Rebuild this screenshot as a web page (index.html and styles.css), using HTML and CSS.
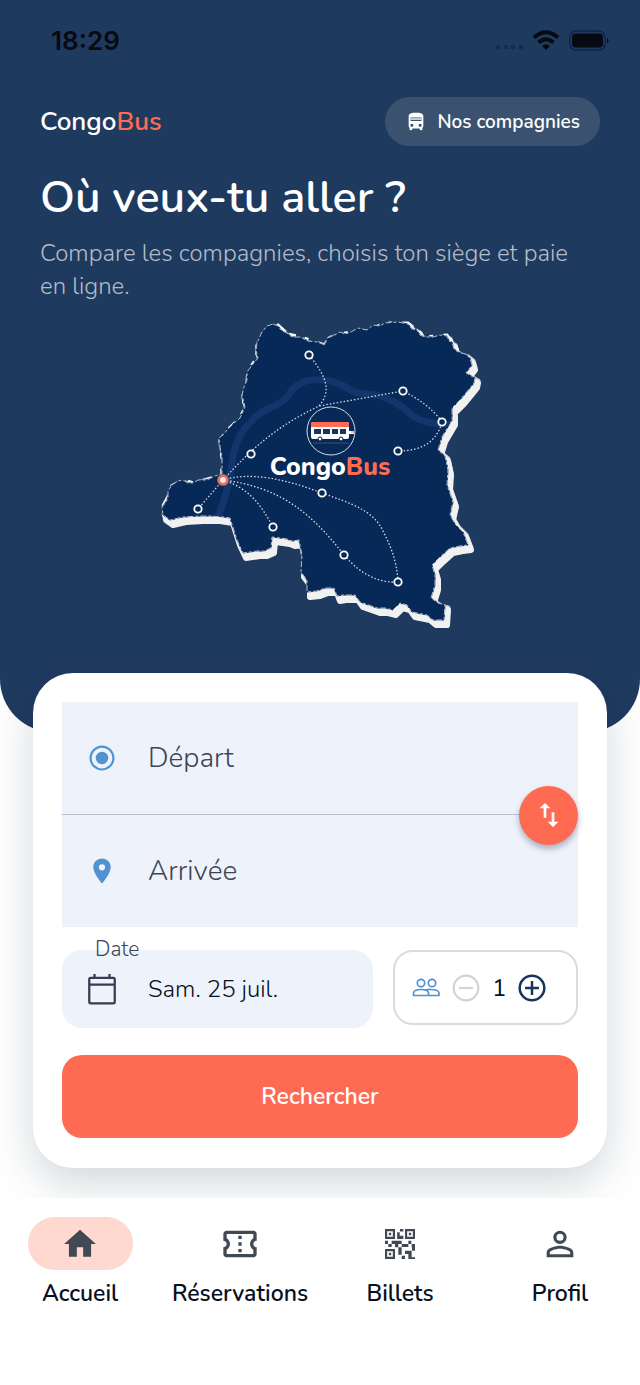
FILE: index.html
```html
<!DOCTYPE html>
<html lang="fr">
<head>
<meta charset="utf-8">
<meta name="viewport" content="width=device-width, initial-scale=1">
<title>CongoBus</title>
<link rel="stylesheet" href="styles.css">
</head>
<body>
<div class="app">
  <main class="content">
    <section class="hero">
      <div class="status">
        <span class="status-time">18:29</span>
        <svg class="status-icons" width="116" height="24" viewBox="0 0 116 24" aria-hidden="true">
          <g fill="#102b55"><rect x="2" y="16" width="4" height="4" rx="1"/><rect x="10" y="16" width="4" height="4" rx="1"/><rect x="17" y="16" width="4" height="4" rx="1"/><rect x="25" y="16" width="4" height="4" rx="1"/></g>
          <g fill="none" stroke="#070a10" stroke-width="4"><path d="M40 8.500Q52 -2 64 8.500"/><path d="M44.500 13.500Q52 7 59.500 13.500"/></g>
          <path d="M48 17Q52 13.500 56 17L52 21Z" fill="#070a10"/>
          <rect x="76" y="2" width="35" height="19" rx="6" fill="none" stroke="#092452" stroke-width="1.500"/>
          <rect x="78" y="4.500" width="31" height="14" rx="4" fill="#070a10"/>
          <path d="M113 8.500q3 3 0 6z" fill="#070a10"/>
        </svg>
      </div>
      <header class="topbar">
        <div class="brand">Congo<span class="accent">Bus</span></div>
        <button class="companies" type="button">
          <svg width="22" height="22" viewBox="0 0 24 24" fill="currentColor" aria-hidden="true"><path fill-rule="evenodd" d="M4 16c0 .88.39 1.670 1 2.220V20c0 .55.45 1 1 1h1c.55 0 1-.45 1-1v-1h8v1c0 .55.45 1 1 1h1c.55 0 1-.45 1-1v-1.780c.61-.55 1-1.340 1-2.220V6c0-3.500-3.580-4-8-4s-8 .5-8 4v10zm3.500 1.200a1.700 1.700 0 1 1 0-3.400 1.700 1.700 0 0 1 0 3.400zm9 0a1.700 1.700 0 1 1 0-3.400 1.700 1.700 0 0 1 0 3.400zM6 11V7h12v4z"/><path d="M6 8h12v1.500H6z"/></svg>
          Nos compagnies
        </button>
      </header>
      <h1 class="title">Où veux-tu aller ?</h1>
      <p class="lead">Compare les compagnies, choisis ton siège et paie en ligne.</p>
      <svg class="map" viewBox="150 310 340 326" role="img" aria-label="Carte des trajets CongoBus">
        <defs>
          <path id="land" d="M273 324L278 326L282 331L287 333L292 337L300 337L308 341L317 342L325 345L327 338L333 336L340 332L345 334L351 332L358 328L367 330L373 325L380 326L385 323L398 322L408 324L412 329L417 330L420 335L425 337L433 337L440 335L447 336L449 341L452 342L454 349L458 352L465 354L470 358L472 365L466 373L475 378L474 383L470 388L460 400L452 408V420L442 437L438 450L445 456L448 470L447 485L453 502L450 515L455 524L463 532L468 545L460 546L450 548L440 557L432 565L435 575V585L431 598L438 603L445 605L444 620H433L427 615L412 612L407 605L400 603L393 610L385 608L377 608L360 602L355 595H343L337 596L334 588L325 588L317 591L307 592V580L301 572L302 555L299 540L292 541L287 539L280 538L272 537L271 548L264 551L257 551L243 553L237 540L230 518L217 516H200L183 517L170 520L163 515L162 507L166 502L168 497L168 491L172 485L178 481L183 480L188 483L193 483L198 480L205 480L209 479L215 476L222 474V457L220 447L219 438L224 434L227 430L233 424L240 418L245 407L242 395L244 387L247 380V372L253 364L258 358L256 350L257 343L262 332L267 326Z" stroke-linejoin="round"/>
          <clipPath id="land-clip"><use href="#land"/></clipPath>
        </defs>
        <use href="#land" fill="#c3c8d0" stroke="#c3c8d0" stroke-width="5" transform="translate(3 3)"/>
        <use href="#land" fill="#f1f1f2" stroke="#f1f1f2" stroke-width="6" transform="translate(3 5)"/>
        <path d="M267 328L260 338L257 346V358L248 371L247 385L243 396L245 408L240 418L227 431L220 440L222 457V475L205 480L193 483L183 480L172 486L168 497L162 508L164 516" fill="none" stroke="#f4f6f8" stroke-width="3.500" stroke-dasharray="9 8 13 7 5 10"/>
        <path d="M277 324L288 334L301 337L325 345L328 338L345 333L367 331L384 323L408 323L425 337L447 335L459 352" fill="none" stroke="#f4f6f8" stroke-width="3" stroke-dasharray="12 4 7 9 4 10"/>
        <use href="#land" fill="#062958" stroke="#0a2b58" stroke-width="1"/>
        <use href="#land" fill="none" stroke="#dfe5ed" stroke-width=".8" stroke-dasharray="6 2 3 2"/>
        <path d="M216 520C226 500 230 480 232 462C236 438 243 429 252 421C262 407 280 407 287 397C299 376 317 379 330 381C348 385 350 394 367 394C385 395 397 402 408 412C418 421 428 424 450 424" clip-path="url(#land-clip)" fill="none" stroke="#12356c" stroke-width="7"/>
        <g fill="none" stroke="#d4dce8" stroke-width="1.300" stroke-dasharray="1.500 2">
          <path d="M309 355C328 378 331 392 319 406"/>
          <path d="M223 480C257 443 280 425 319 406L403 391C419 399 433 409 442 422C437 441 423 451 398 451"/>
          <path d="M223 480L198 509"/>
          <path d="M223 480C249 472 283 478 322 493C352 504 374 510 384 533C392 549 397 563 398 582"/>
          <path d="M223 480C248 488 260 503 273 527"/>
          <path d="M223 480C281 487 312 514 344 555C362 576 380 583 398 582"/>
        </g>
        <g fill="#062958" stroke="#fff" stroke-width="1.800">
          <circle cx="309" cy="355" r="3.700"/><circle cx="403" cy="391" r="3.700"/><circle cx="442" cy="422" r="3.700"/><circle cx="398" cy="451" r="3.700"/><circle cx="251" cy="454" r="3.700"/><circle cx="198" cy="509" r="3.700"/><circle cx="273" cy="527" r="3.700"/><circle cx="322" cy="493" r="3.700"/><circle cx="344" cy="555" r="3.700"/><circle cx="398" cy="582" r="3.700"/>
        </g>
        <circle cx="223" cy="480" r="6" fill="#5f7189"/><circle cx="223" cy="480" r="4" fill="#fff" stroke="#ff6b52" stroke-width="2.500"/>
        <circle cx="331" cy="431" r="24" fill="#062958" stroke="#d5dce6"/>
        <path d="M313 443H349" stroke="#223c66" stroke-width="2"/>
        <rect x="311" y="422" width="38" height="17" rx="2" fill="#fff"/>
        <path d="M313 422h34q2 0 2 2v3h-38v-3q0-2 2-2z" fill="#ff6b52"/>
        <path d="M349 431h5v3h-5z" fill="#fff"/><path d="M351 432h3" stroke="#ff6b52"/>
        <g fill="#17365f"><rect x="314" y="429" width="7" height="5"/><rect x="323" y="429" width="7" height="5"/><rect x="332" y="429" width="6" height="5"/><rect x="340" y="429" width="6" height="5"/></g>
        <circle cx="320" cy="439" r="2" fill="#fff" stroke="#031a3c"/><circle cx="341" cy="439" r="2" fill="#fff" stroke="#031a3c"/>
        <text class="map-brand" x="330" y="475" text-anchor="middle">Congo<tspan class="map-accent">Bus</tspan></text>
      </svg>
    </section>

    <form class="card">
      <div class="route">
        <label class="place">
          <svg width="30" height="30" viewBox="0 0 24 24" fill="currentColor" aria-hidden="true"><path d="M12 7a5 5 0 1 0 0 10 5 5 0 0 0 0-10zm0-5C6.480 2 2 6.480 2 12s4.480 10 10 10 10-4.480 10-10S17.520 2 12 2zm0 18.300a8.300 8.300 0 1 1 0-16.600 8.300 8.300 0 0 1 0 16.600z"/></svg>
          <input class="place-input" type="text" placeholder="Départ" aria-label="Départ">
        </label>
        <label class="place">
          <svg width="30" height="30" viewBox="0 0 24 24" fill="currentColor" aria-hidden="true"><path d="M12 2C8.130 2 5 5.130 5 9c0 5.250 7 13 7 13s7-7.750 7-13c0-3.870-3.130-7-7-7zm0 9.500a2.500 2.500 0 0 1 0-5 2.500 2.500 0 0 1 0 5z"/></svg>
          <input class="place-input" type="text" placeholder="Arrivée" aria-label="Arrivée">
        </label>
        <button class="swap" type="button" aria-label="Inverser départ et arrivée">
          <svg width="32" height="32" viewBox="0 0 24 24" fill="currentColor" aria-hidden="true"><path d="M16 17.010V10h-2v7.010h-3L15 21l4-3.990h-3zM9 3 5 6.990h3V14h2V6.990h3L9 3z"/></svg>
        </button>
      </div>
      <div class="options">
        <div class="date">
          <label class="date-label" for="date">Date</label>
          <svg width="36" height="36" viewBox="0 0 24 24" fill="none" stroke="currentColor" stroke-width="1.500" aria-hidden="true"><rect x="3.500" y="4.500" width="17" height="17" rx="1"/><path d="M3.500 9h17M7 2v3M17 2v3"/></svg>
          <input class="date-input" id="date" type="text" value="Sam. 25 juil.">
        </div>
        <div class="passengers" role="group" aria-label="Passagers">
          <svg class="people" width="28" height="20" viewBox="0 0 28 20" fill="none" stroke="#5291d2" stroke-width="1.700" aria-hidden="true"><circle cx="9" cy="5" r="3.700"/><circle cx="20" cy="5" r="3.700"/><path d="M1.500 17.500V15Q2 11.500 9 11.500Q16 11.500 16.500 15V17.500ZM13.500 12Q16 11.300 19 11.500Q26.500 11.500 27 15V17.500H16"/></svg>
          <button class="step step-off" type="button" aria-label="Moins" disabled><svg width="28" height="28" viewBox="0 0 28 28" fill="none" stroke="currentColor" stroke-width="2.200" aria-hidden="true"><circle cx="14" cy="14" r="12.300"/><path d="M7 14h14"/></svg></button>
          <output class="count">1</output>
          <button class="step" type="button" aria-label="Plus"><svg width="28" height="28" viewBox="0 0 28 28" fill="none" stroke="currentColor" stroke-width="2.500" aria-hidden="true"><circle cx="14" cy="14" r="12.300"/><path d="M7 14h14M14 7v14"/></svg></button>
        </div>
      </div>
      <button class="search" type="submit">Rechercher</button>
    </form>
  </main>

  <nav class="tabs">
    <a class="tab" href="#accueil" aria-current="page"><span class="tab-icon tab-active"><svg width="38" height="38" viewBox="0 0 24 24" fill="currentColor" aria-hidden="true"><path d="M10 20v-6h4v6h5v-8h3L12 3 2 12h3v8z"/></svg></span>Accueil</a>
    <a class="tab" href="#reservations"><span class="tab-icon"><svg width="40" height="40" viewBox="0 0 24 24" fill="currentColor" aria-hidden="true"><path d="M22 10V6c0-1.110-.9-2-2-2H4c-1.100 0-1.990.89-1.990 2v4c1.100 0 1.990.9 1.990 2s-.89 2-2 2v4c0 1.100.9 2 2 2h16c1.100 0 2-.9 2-2v-4c-1.100 0-2-.9-2-2s.9-2 2-2zm-2-1.460c-1.190.69-2 1.990-2 3.460s.81 2.770 2 3.460V18H4v-2.540c1.190-.69 2-1.990 2-3.460 0-1.480-.8-2.770-1.990-3.460L4 6h16v2.540zM11 15h2v2h-2zm0-4h2v2h-2zm0-4h2v2h-2z"/></svg></span>Réservations</a>
    <a class="tab" href="#billets"><span class="tab-icon"><svg width="30" height="30" viewBox="0 0 18 18" fill="currentColor" aria-hidden="true"><path fill-rule="evenodd" d="M0 0h6v6H0zM1.300 1.300v3.400h3.400V1.300zM12 0h6v6h-6zM13.300 1.300v3.400h3.400V1.300zM0 12h6v6H0zM1.300 13.300v3.400h3.400v-3.400z"/><path d="M2.300 2.300h1.400v1.400H2.300zM14.300 2.300h1.400v1.400h-1.400zM2.300 14.300h1.400v1.400H2.300zM9 0h2v1.500H9zM7.300 2h1.500v2H11v2H7.300zM0 7h1.800v2H0zM2 9h2v1.800H2zM4 7h6v2H8v2H6V9H4zM10 9h4v1.800h-4zM14 7h1.800v2H14zM16 9h2v4h-1.800v-2H16zM8 11h2v4.500H8zM12 13h4v4h2v1h-4v-3h-2zM10 16h2v2h-2z"/></svg></span>Billets</a>
    <a class="tab" href="#profil"><span class="tab-icon"><svg width="40" height="40" viewBox="0 0 24 24" fill="currentColor" aria-hidden="true"><path d="M12 5.900a2.100 2.100 0 1 1 0 4.200 2.100 2.100 0 0 1 0-4.200m0 9c2.970 0 6.100 1.460 6.100 2.100v1.100H5.900V17c0-.64 3.130-2.100 6.100-2.100M12 4C9.790 4 8 5.790 8 8s1.790 4 4 4 4-1.790 4-4-1.790-4-4-4zm0 9c-2.670 0-8 1.340-8 4v3h16v-3c0-2.660-5.330-4-8-4z"/></svg></span>Profil</a>
  </nav>
</div>
</body>
</html>
```
FILE: styles.css
```css
* { box-sizing: border-box; }
body {
  margin: 0;
  background: #fff;
  color: #07101f;
  font-family: Nunito, Lato, "Noto Sans", sans-serif;
}
button, input { font: inherit; color: inherit; border: 0; padding: 0; background: none; }
button { cursor: pointer; }
svg { display: block; flex: none; }

.app { min-height: 100vh; display: flex; flex-direction: column; }
.content { overflow: hidden; padding-bottom: 30px; }

.hero {
  background: #1f3a5f;
  color: #fff;
  padding: 28px 40px 96px;
  border-radius: 0 0 53px 53px;
}
.status { display: flex; justify-content: space-between; align-items: center; height: 26px; margin: 0 -10px 0 11px; }
.status-time { font: 600 26px/26px Inter, sans-serif; color: #070a10; }
.topbar { display: flex; justify-content: space-between; align-items: center; margin-top: 43px; }
.brand { font-size: 26px; font-weight: 600; line-height: 36px; }
.accent { color: #ff6b52; }
.companies {
  display: flex; align-items: center; gap: 10px;
  height: 49px; padding: 0 20px; border-radius: 25px;
  background: #3a5270; font-size: 19px; font-weight: 600;
}
.title { margin: 20px 0 0; font-size: 45px; line-height: 64px; font-weight: 600; }
.lead { margin: 7px 0 0; font-size: 24px; line-height: 33px; font-weight: 300; color: #b4bcc8; }
.map { width: 340px; max-width: 100%; margin: 7px auto 0; }
.map-brand { font-size: 25px; font-weight: 800; fill: #fff; }
.map-accent { fill: #ff6b52; }

.card {
  position: relative;
  margin: -59px 33px 0;
  padding: 29px 29px 30px;
  background: #fff;
  border-radius: 40px;
  box-shadow: 0 16px 44px rgba(20, 40, 60, .19);
}
.route { position: relative; background: #eef3fb; }
.place { display: flex; align-items: center; gap: 31px; height: 112px; padding: 0 25px; color: #5291d2; }
.place + .place { border-top: 1px solid #b9bfcd; height: 113px; }
.place-input { flex: 1; min-width: 0; font-size: 28px; font-weight: 300; color: #3c4456; outline: 0; }
.place-input::placeholder { color: #3c4456; opacity: 1; }
.swap {
  position: absolute; right: 0; top: calc(50% - 29px);
  width: 59px; height: 59px; border-radius: 50%;
  display: grid; place-items: center;
  background: #ff6b52; color: #fff;
  box-shadow: 0 4px 6px rgba(40, 55, 85, .35);
}
.options { display: grid; grid-template-columns: 311fr 185fr; align-items: start; gap: 20px; margin-top: 23px; }
.date {
  position: relative; min-width: 0; height: 78px; padding: 0 22px;
  display: flex; align-items: center; gap: 28px;
  background: #eef3fb; border-radius: 20px; color: #343e50;
}
.date-label { position: absolute; left: 33px; top: -13px; font-size: 21px; line-height: 24px; font-weight: 300; color: #3c4456; }
.date-input { flex: 1; min-width: 0; font-size: 24px; font-weight: 300; color: #07101f; outline: 0; }
.passengers {
  height: 75px; padding: 0 17px;
  display: flex; align-items: center; gap: 12px;
  border: 2px solid #d8dbe1; border-radius: 20px;
}
.step { color: #19355c; }
.step-off { color: #d0d3d8; }
.count { font-size: 24px; line-height: 28px; }
.search {
  display: block; width: 100%; height: 83px; margin-top: 27px;
  background: #ff6b52; border-radius: 20px; color: #fff; font-size: 23px; font-weight: 600;
}

.tabs { position: relative; flex: 1; display: grid; grid-template-columns: repeat(4, 1fr); align-items: start; padding-top: 19px; background: #fff; }
.tab { display: flex; flex-direction: column; align-items: center; gap: 8px; font-size: 23px; line-height: 32px; font-weight: 600; color: inherit; text-decoration: none; }
.tab-icon { display: grid; place-items: center; width: 105px; height: 53px; border-radius: 27px; color: #414955; }
.tab-active { background: #ffd9d0; }
```
